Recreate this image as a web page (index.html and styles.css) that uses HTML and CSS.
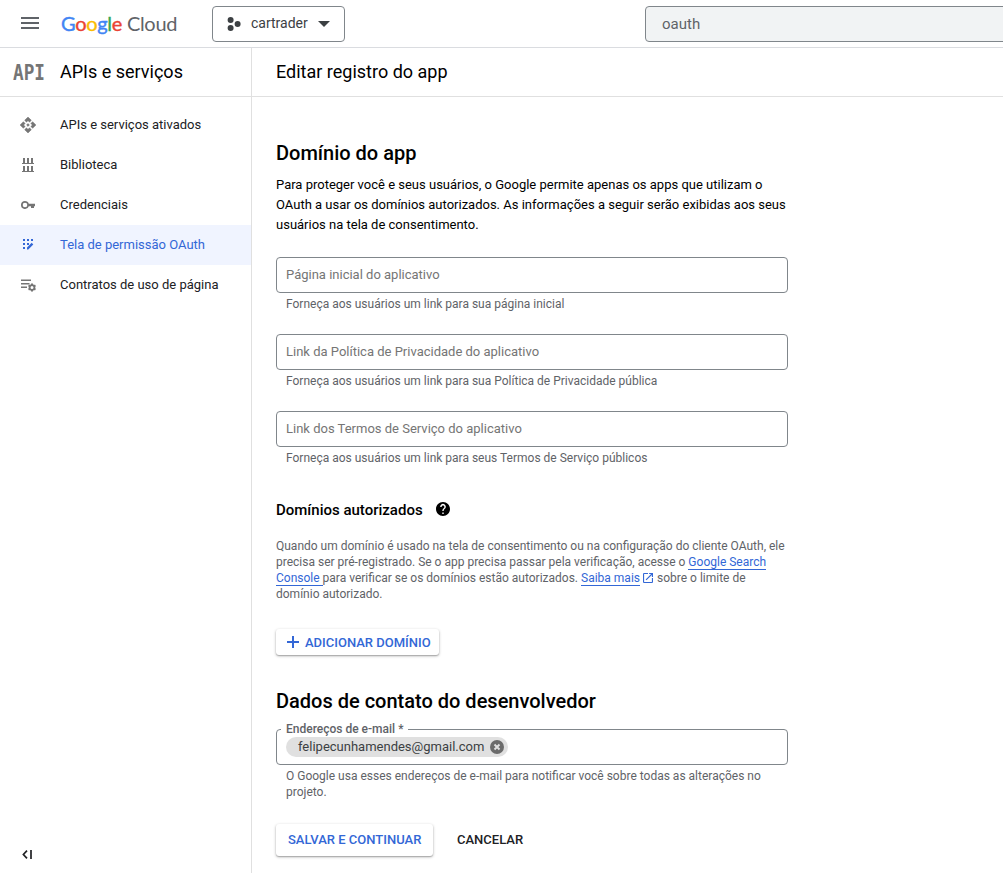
FILE: index.html
```html
<!DOCTYPE html>
<html lang="pt-BR">
<head>
<meta charset="utf-8">
<title>Editar registro do app – Google Cloud</title>
<link rel="stylesheet" href="styles.css">
</head>
<body>
<header class="topbar">
  <svg class="menu" viewBox="0 0 18 12"><path d="M0 0h18v2H0zM0 5h18v2H0zM0 10h18v2H0z"/></svg>
  <div class="logo"><span class="blue">G</span><span class="red">o</span><span class="yellow">o</span><span class="blue">g</span><span class="green">l</span><span class="red">e</span> <span class="cloud">Cloud</span></div>
  <button class="project">
    <svg class="dots" viewBox="0 0 14 14"><circle cx="3.6" cy="3" r="3"/><circle cx="3.6" cy="11" r="3"/><circle cx="10.6" cy="7" r="3"/></svg>
    <span class="project-name">cartrader</span>
    <svg class="caret" viewBox="0 0 12 6"><path d="M0 0h12L6 6z"/></svg>
  </button>
  <div class="search">oauth</div>
</header>
<div class="shell">
  <aside class="sidebar">
    <div class="side-head">
      <svg class="api" viewBox="0 0 34 28"><text x="1" y="22" textLength="32" lengthAdjust="spacingAndGlyphs">API</text></svg>
      <span class="side-title">APIs e serviços</span>
    </div>
    <nav class="nav">
      <a class="item"><svg viewBox="1 1 22 22"><path d="M14 12l-2 2-2-2 2-2 2 2zm-2-6l2.120 2.120 2.500-2.500L12 1 7.380 5.620l2.500 2.500L12 6zm-6 6l2.120-2.120-2.500-2.500L1 12l4.620 4.620 2.500-2.500L6 12zm12 0l-2.120 2.120 2.500 2.500L23 12l-4.620-4.620-2.500 2.500L18 12zm-6 6l-2.120-2.120-2.500 2.500L12 23l4.620-4.620-2.500-2.500L12 18z" stroke="currentColor" stroke-width=".6"/></svg><span>APIs e serviços ativados</span></a>
      <a class="item"><svg viewBox="0 0 16 16"><path d="M3 1h2v5H3zM7 1h2v5H7zM11 1h2v5h-2zM2 6h12v1H2zM3 9h2v5H3zM7 9h2v5H7zM11 9h2v5h-2zM2 14h12v1H2z"/></svg><span>Biblioteca</span></a>
      <a class="item"><svg viewBox="0 0 16 16"><path fill-rule="evenodd" d="M5 4a4 4 0 1 0 3.800 5.200H11V11h3V9.200h1V6.800H8.800A4 4 0 0 0 5 4zm0 1.700a2.300 2.300 0 1 1 0 4.600 2.300 2.300 0 0 1 0-4.600z"/></svg><span>Credenciais</span></a>
      <a class="item active"><svg viewBox="0 0 16 16"><path d="M3 2h2v2H3zM7 2h2v2H7zM11 2h2v2h-2zM3 6h2v2H3zM7 6h2v2H7zM3 10h2v2H3zM7 12.500v-2L11.700 5.800l1.600 1.600-5 5.100z"/></svg><span>Tela de permissão OAuth</span></a>
      <a class="item"><svg viewBox="0 0 16 16"><path d="M1 2.500h10V4H1zM1 6h8.500v1.500H1zM1 9.500h6V11H1z"/><circle cx="12" cy="10.500" r="2.400" fill="none" stroke="currentColor" stroke-width="1.800"/><path d="M11 6.400h2v1.700h-2zM11 12.900h2v1.700h-2zM8 9.200l1-1.700 1.500.9-1 1.700zM15 7.500l1 1.700-1.500.9-1-1.700zM9 13.500l-1-1.700 1.500-.9 1 1.700zM16 11.800l-1 1.700-1.500-.9 1-1.700z"/></svg><span>Contratos de uso de página</span></a>
    </nav>
    <svg class="collapse" viewBox="0 0 10 9"><path d="M5 .7L1.400 4.500 5 8.300M9 0v9" fill="none" stroke="#202124" stroke-width="1.700"/></svg>
  </aside>
  <main class="main">
    <div class="page-head"><span class="page-title">Editar registro do app</span></div>
    <div class="content">
      <h2>Domínio do app</h2>
      <p class="intro">Para proteger você e seus usuários, o Google permite apenas os apps que utilizam o<br>OAuth a usar os domínios autorizados. As informações a seguir serão exibidas aos seus<br>usuários na tela de consentimento.</p>
      <div class="field"><div class="box">Página inicial do aplicativo</div><div class="hint">Forneça aos usuários um link para sua página inicial</div></div>
      <div class="field"><div class="box">Link da Política de Privacidade do aplicativo</div><div class="hint">Forneça aos usuários um link para sua Política de Privacidade pública</div></div>
      <div class="field"><div class="box">Link dos Termos de Serviço do aplicativo</div><div class="hint">Forneça aos usuários um link para seus Termos de Serviço públicos</div></div>
      <div class="auth-head"><h3>Domínios autorizados</h3><svg class="help" viewBox="0 0 24 24"><path d="M12 0C5.400 0 0 5.400 0 12s5.400 12 12 12 12-5.400 12-12S18.600 0 12 0zm1.200 20.400h-2.400V18h2.400zm2.480-9.300l-1.080 1.100c-.86.88-1.400 1.600-1.400 3.400h-2.400v-.6c0-1.320.54-2.520 1.400-3.390l1.490-1.510c.44-.43.710-1.030.710-1.700a2.400 2.400 0 0 0-4.800 0H7.200a4.800 4.800 0 1 1 8.480 2.700z"/></svg></div>
      <p class="note">Quando um domínio é usado na tela de consentimento ou na configuração do cliente OAuth, ele<br>precisa ser pré-registrado. Se o app precisa passar pela verificação, acesse o <a class="link">Google Search</a><br><a class="link">Console </a>para verificar se os domínios estão autorizados. <a class="link">Saiba mais</a><svg class="ext" viewBox="0 0 18 18"><path d="M16 16H2V2h7V0H2a2 2 0 0 0-2 2v14a2 2 0 0 0 2 2h14a2 2 0 0 0 2-2V9h-2zM11 0v2h3.590l-9.830 9.830 1.410 1.410L16 3.410V7h2V0z"/></svg>sobre o limite de<br>domínio autorizado.</p>
      <button class="raised add"><svg viewBox="0 0 12 12"><path d="M5 0h2v5h5v2H7v5H5V7H0V5h5z"/></svg><span>ADICIONAR DOMÍNIO</span></button>
      <h2 class="h-contact">Dados de contato do desenvolvedor</h2>
      <div class="box email">
        <span class="label">Endereços de e-mail *</span>
        <span class="chip"><span class="addr">felipecunhamendes@gmail.com</span><svg viewBox="0 0 14 14"><circle cx="7" cy="7" r="7" fill="#6b6b6b"/><path d="M4.500 4.500l5 5M9.500 4.500l-5 5" stroke="#e0e0e0" stroke-width="1.900"/></svg></span>
      </div>
      <div class="hint">O Google usa esses endereços de e-mail para notificar você sobre todas as alterações no<br>projeto.</div>
      <div class="actions"><button class="raised save"><span>SALVAR E CONTINUAR</span></button><button class="cancel"><span>CANCELAR</span></button></div>
    </div>
  </main>
</div>
</body>
</html>
```
FILE: styles.css
```css
* { box-sizing: border-box; }
body { margin: 0; width: 1003px; height: 873px; overflow: hidden; background: #fff; color: #000; font-family: Roboto, sans-serif; font-size: 13px; display: flex; flex-direction: column; }
button { font: inherit; margin: 0; padding: 0; border: 0; background: none; }
h2, h3, p { margin: 0; }
svg { display: block; flex: none; }

.topbar { height: 48px; flex: none; border-bottom: 1px solid #dadce0; display: flex; align-items: flex-start; overflow: hidden; }
.menu { width: 18px; height: 12px; margin: 17px 0 0 21px; fill: #5f6368; flex: none; }
.logo { width: 117px; flex: none; margin: 9px 0 0 22px; font: 20px/28px Lato, sans-serif; letter-spacing: -.3px; white-space: nowrap; color: #5f6368; }
.blue { color: #4285f4; }
.red { color: #ea4335; }
.yellow { color: #fbbc04; }
.green { color: #34a853; }
.logo .blue, .logo .red, .logo .yellow, .logo .green { -webkit-text-stroke: .4px currentColor; }
.project { width: 133px; flex: none; height: 36px; margin: 6px 0 0 34px; border: 1px solid #80868b; border-radius: 4px; display: flex; align-items: center; padding-left: 14px; }
.dots { width: 14px; height: 14px; fill: #3c4043; }
.project-name { font-size: 14px; line-height: 16px; color: #3c4043; width: 57px; margin: 0 10px 2px; text-align: left; }
.caret { width: 12px; height: 6px; fill: #3c4043; }
.search { height: 36px; width: 370px; margin: 6px 0 0 300px; flex: none; border: 1px solid #80868b; border-radius: 4px; background: #f1f3f4; padding-left: 16px; font-size: 15px; line-height: 34px; color: #5f6368; }

.shell { display: flex; flex: 1; min-height: 0; }
.sidebar { width: 252px; flex: none; border-right: 1px solid #e0e0e0; display: flex; flex-direction: column; }
.side-head, .page-head { height: 49px; flex: none; border-bottom: 1px solid #e0e0e0; display: flex; align-items: center; font-size: 18px; }
.side-title, .page-title { padding-bottom: 2px; }
.api { width: 34px; height: 28px; margin: 0 14px 0 12px; }
.api text { font: bold 22px "DejaVu Sans Mono", monospace; fill: #757575; }
.nav { padding-top: 8px; flex: 1; }
.item { height: 40px; display: flex; align-items: center; gap: 24px; padding-left: 20px; color: #202124; white-space: nowrap; }
.item span { padding-bottom: 2px; }
.item svg { width: 16px; height: 16px; fill: #757575; color: #757575; }
.item.active { background: #f0f4ff; color: #3367d6; }
.item.active svg { fill: #3367d6; }
.collapse { width: 10px; height: 9px; margin: 0 0 14px 22px; }

.main { flex: 1; min-width: 0; }
.page-head { padding-left: 24px; }
.content { width: 536px; padding: 44px 0 0 24px; }
h2 { font-weight: 500; font-size: 20px; line-height: 24px; white-space: nowrap; }
.intro { margin: 10px 0 22px; line-height: 20px; white-space: nowrap; }
.field { height: 77px; }
.box { width: 512px; height: 36px; border: 1px solid #80868b; border-radius: 4px; padding-left: 9px; line-height: 34px; color: #757575; }
.hint { padding: 3px 0 0 10px; font-size: 12px; line-height: 16px; color: #5f6368; white-space: nowrap; }
.auth-head { display: flex; align-items: center; gap: 13px; margin-top: 12px; height: 20px; }
h3 { font-weight: 500; font-size: 15px; line-height: 20px; white-space: nowrap; }
.help { width: 14px; height: 14px; margin-bottom: 2px; }
.note { margin-top: 18px; font-size: 12px; line-height: 16px; color: #5f6368; white-space: nowrap; }
.link { color: #3367d6; border-bottom: 1px solid #3367d6; }
.ext { display: inline-block; width: 10px; height: 10px; margin: 0 4px 0 3px; fill: #3367d6; vertical-align: -1px; }
.raised { border-radius: 3px; box-shadow: 0 1px 3px rgba(0,0,0,.3), 0 1px 1px rgba(0,0,0,.16); color: #3367d6; font-weight: 500; display: flex; align-items: center; white-space: nowrap; }
.add { width: 163px; height: 26px; margin-top: 27px; padding-left: 11px; gap: 6px; }
.add svg { width: 12px; height: 12px; fill: #3367d6; }
.h-contact { margin-top: 34px; }
.email { position: relative; margin-top: 16px; padding-top: 7px; }
.label { position: absolute; left: 4px; top: -9px; padding: 0 5px; background: #fff; font-size: 12px; line-height: 16px; font-weight: 500; color: #5f6368; white-space: nowrap; }
.chip { width: 222px; height: 20px; border-radius: 10px; background: #e0e0e0; color: #3c4043; display: flex; align-items: center; justify-content: space-between; padding: 0 4px 0 12px; line-height: 20px; }
.chip svg { width: 14px; height: 14px; }
.actions { display: flex; margin-top: 24px; align-items: center; }
.save { width: 157px; height: 32px; padding-left: 12px; }
.save span, .cancel span { display: block; padding-bottom: 2px; }
.cancel { margin-left: 24px; font-weight: 500; color: #202124; }
```
